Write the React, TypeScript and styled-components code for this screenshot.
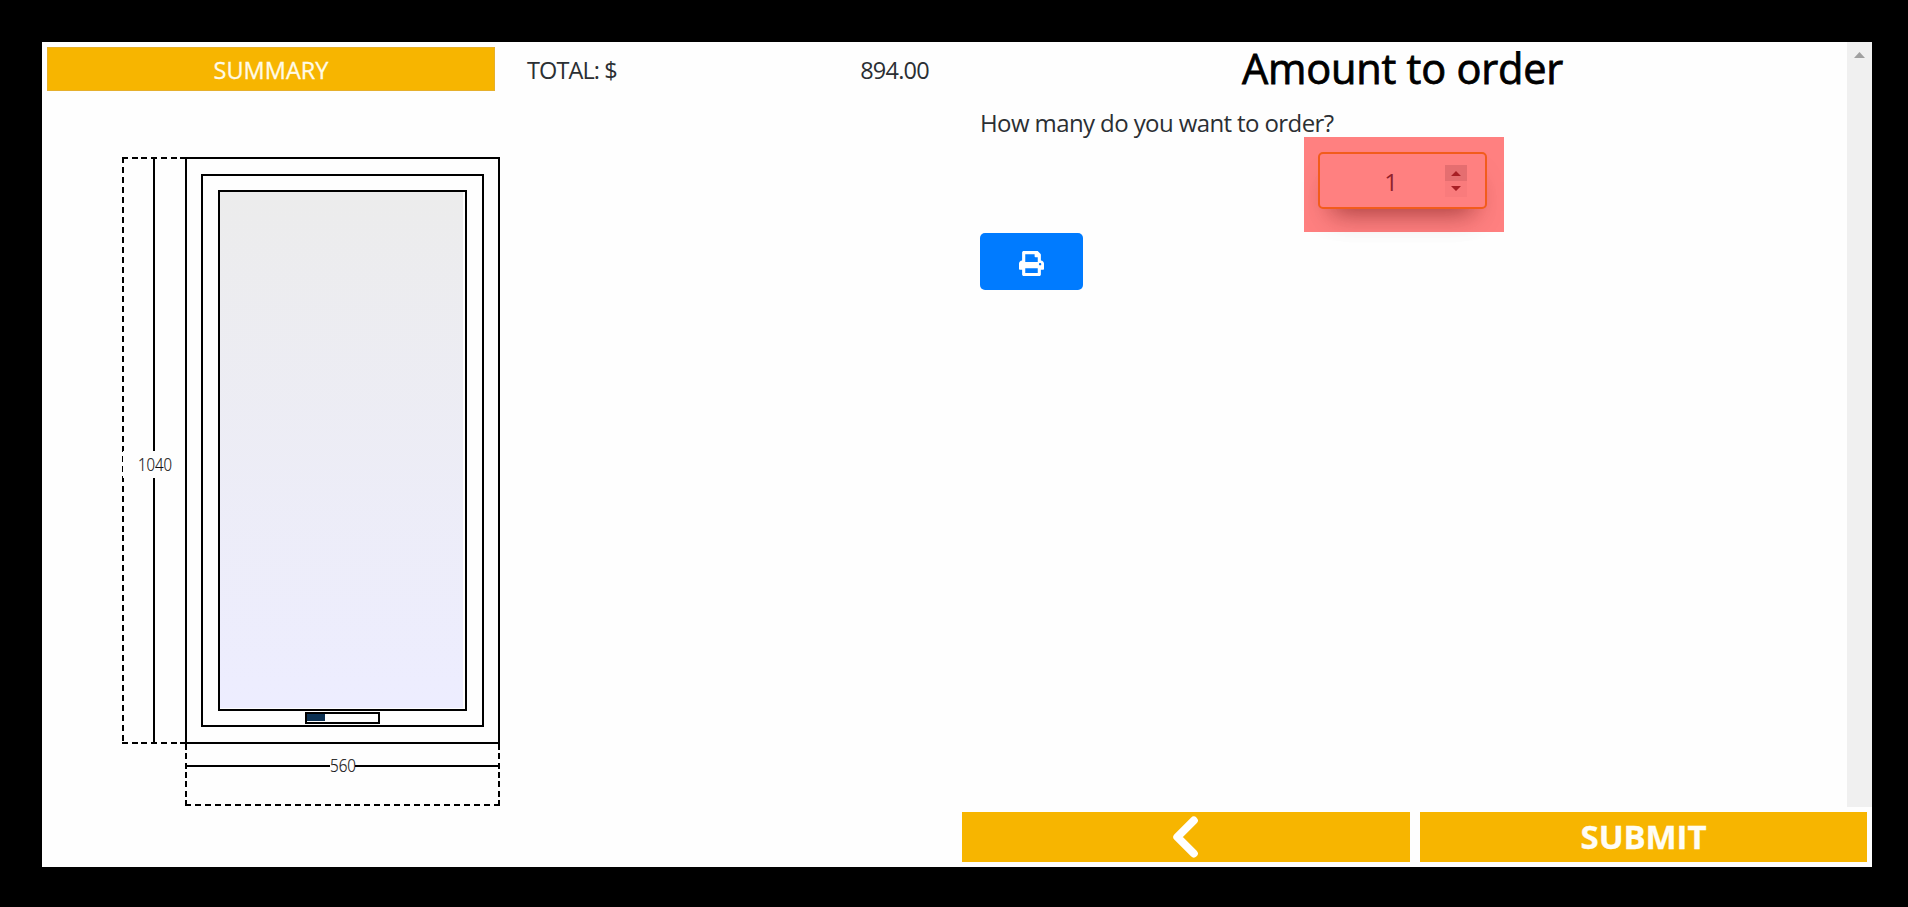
import React from "react";
import styled, { createGlobalStyle } from "styled-components";

const Global = createGlobalStyle`
  * { box-sizing: border-box; }
  html, body { margin: 0; background: #000; }
  body { font-family: "Open Sans", "Noto Sans", sans-serif; color: #2b2f33; overflow: hidden; }
`;

const AMBER = "#f7b500";

const Frame = styled.div`
  width: 1908px;
  height: 907px;
  background: #000;
  padding: 42px 36px 40px 42px;
  display: grid;
  grid-template-columns: 915px 915px;
`;

const Panel = styled.section`
  background: #fefefe;
  display: flex;
  flex-direction: column;
  min-height: 0;
`;

const TopBar = styled.header`
  display: grid;
  grid-template-columns: 448px 1fr;
  grid-template-rows: 44px;
  height: 44px;
  margin: 5px 0 0 5px;
`;

const SummaryButton = styled.button`
  border: 1px solid #e6b02c;
  background: ${AMBER};
  color: #fffbe8;
  font: 400 23.5px/42px "Open Sans", sans-serif;
  letter-spacing: 0;
  -webkit-text-stroke: 0.3px #fffbe8;
  padding: 1px 0 0;
  overflow: hidden;
`;

const Total = styled.div`
  display: flex;
  justify-content: space-between;
  padding: 0 28px 0 32px;
  font-size: 23.5px;
  line-height: 46px;
`;

const TotalLabel = styled.span`
  letter-spacing: -0.9px;
`;

const TotalValue = styled.span`
  letter-spacing: -0.75px;
`;

const Drawing = styled.svg`
  display: block;
  margin: 64px 0 0 78px;
`;

const Dimension = styled.text`
  font-family: "Open Sans", sans-serif;
  font-weight: 300;
  font-size: 18px;
  fill: #111;
  stroke: #111;
  stroke-width: 0.2px;
  text-anchor: middle;
`;

const ScrollArea = styled.div`
  height: 765px;
  display: grid;
  grid-template-columns: 1fr 25px;
`;

const Content = styled.div`
  padding-left: 23px;
  display: flex;
  flex-direction: column;
  align-items: flex-start;
`;

const Title = styled.h1`
  align-self: stretch;
  margin: 0;
  padding-right: 22px;
  height: 60px;
  text-align: center;
  color: #000;
  font-weight: 500;
  font-size: 41.5px;
  line-height: 53px;
  letter-spacing: -0.2px;
  -webkit-text-stroke: 0.8px #000;
`;

const Question = styled.label`
  height: 35px;
  line-height: 42px;
  font-size: 24px;
  letter-spacing: -0.6px;
  white-space: nowrap;
`;

const Highlight = styled.div`
  width: 200px;
  height: 95px;
  margin-left: 324px;
  padding: 15px 17px 23px 14px;
  background: #ff8080;
`;

const NumberField = styled.div`
  height: 57px;
  border: 2px solid #f25c1c;
  border-radius: 5px;
  background: #ff8080;
  display: grid;
  grid-template-columns: 1fr 22px;
  padding: 11px 18px 10px 18px;
  box-shadow: 0 16px 26px -14px rgba(90, 0, 0, 0.55), 0 22px 30px -12px rgba(90, 40, 40, 0.08);
`;

const Value = styled.span`
  text-align: center;
  color: #90222c;
  font-size: 24px;
  line-height: 34px;
  padding-right: 1px;
`;

const Spinner = styled.svg`
  display: block;
`;

const PrintButton = styled.button`
  width: 103px;
  height: 57px;
  margin-top: 1px;
  border: 0;
  border-radius: 5px;
  background: #007bff;
  display: flex;
  align-items: center;
  justify-content: center;
  padding: 4px 0 0;
`;

const Track = styled.div`
  background: #f0f0f0;
  padding: 10px 0 0 7px;
`;

const Actions = styled.footer`
  display: grid;
  grid-template-columns: 448px 447px;
  gap: 10px;
  padding: 5px;
  height: 60px;
`;

const ActionButton = styled.button`
  border: 0;
  padding: 0;
  background: ${AMBER};
  color: #fffdf5;
  font: 700 33px/50px "Open Sans", sans-serif;
  letter-spacing: -0.1px;
  -webkit-text-stroke: 0.3px #fffdf5;
  display: flex;
  align-items: center;
  justify-content: center;
`;

function WindowDrawing() {
  return (
    <Drawing width="384" height="653" viewBox="120 155 384 653" shapeRendering="crispEdges">
      <defs>
        <linearGradient id="glass" x1="0" y1="0" x2="0" y2="1">
          <stop offset="0" stopColor="#ececec" />
          <stop offset="1" stopColor="#ededff" />
        </linearGradient>
      </defs>
      <g fill="none" stroke="#000" strokeWidth="2">
        <path d="M122 158H187" strokeDasharray="6 3.7" />
        <path d="M122 743H187" strokeDasharray="6 3.7" />
        <path d="M123 157V744" strokeDasharray="6 3.96" />
        <path d="M186 744V806M499 744V806" strokeDasharray="6 3.33" />
        <path d="M185 805H500" strokeDasharray="6 3.97" />
        <path d="M154 158V451M154 478V743" />
        <path d="M187 766H330M355 766H499" />
        <rect x="186" y="158" width="313" height="585" />
        <rect x="202" y="175" width="281" height="551" />
        <rect x="219" y="191" width="247" height="519" />
        <rect x="306" y="713" width="73" height="10" />
      </g>
      <rect x="220" y="192" width="243" height="516" fill="url(#glass)" />
      <rect x="307" y="714" width="18" height="7" fill="#0b3052" />
      <rect x="123" y="451" width="28" height="27" fill="#fefefe" />
      <Dimension x="155" y="471" textLength="34" lengthAdjust="spacingAndGlyphs">1040</Dimension>
      <Dimension x="343" y="772" textLength="26" lengthAdjust="spacingAndGlyphs">560</Dimension>
    </Drawing>
  );
}

export default function App() {
  return (
    <>
      <Global />
      <Frame>
        <Panel>
          <TopBar>
            <SummaryButton>SUMMARY</SummaryButton>
            <Total>
              <TotalLabel>TOTAL: $</TotalLabel>
              <TotalValue>894.00</TotalValue>
            </Total>
          </TopBar>
          <WindowDrawing />
        </Panel>
        <Panel>
          <ScrollArea>
            <Content>
              <Title>Amount to order</Title>
              <Question>How many do you want to order?</Question>
              <Highlight>
                <NumberField>
                  <Value>1</Value>
                  <Spinner width="22" height="32" viewBox="0 0 22 32">
                    <path d="M0 0h22v16H0z" fill="#e56e70" />
                    <path d="M0 16h22v16H0z" fill="#f97b7c" />
                    <path d="M6 11l5-5 5 5zM6 21h10l-5 5z" fill="#a81f25" />
                  </Spinner>
                </NumberField>
              </Highlight>
              <PrintButton aria-label="Print">
                <svg width="25" height="25" viewBox="0 0 512 512" fill="#fff">
                  <path d="M448 192V77.25c0-8.49-3.37-16.62-9.37-22.63L393.37 9.37c-6-6-14.14-9.37-22.63-9.37H96C78.33 0 64 14.33 64 32v160c-35.35 0-64 28.65-64 64v112c0 8.84 7.16 16 16 16h48v96c0 17.67 14.33 32 32 32h320c17.67 0 32-14.33 32-32v-96h48c8.84 0 16-7.16 16-16V256c0-35.35-28.65-64-64-64zm-64 256H128v-96h256v96zm0-224H128V64h192v48c0 8.84 7.16 16 16 16h48v96zm48 72c-13.25 0-24-10.75-24-24 0-13.26 10.75-24 24-24s24 10.74 24 24c0 13.25-10.75 24-24 24z" />
                </svg>
              </PrintButton>
            </Content>
            <Track>
              <svg width="11" height="6" viewBox="0 0 11 6" display="block">
                <path d="M0 6L5.500 0L11 6z" fill="#a0a0a0" />
              </svg>
            </Track>
          </ScrollArea>
          <Actions>
            <ActionButton aria-label="Back">
              <svg width="26" height="42" viewBox="0.7 0 26 42">
                <path d="M21.500 4.500L5 21L21.500 37.500" fill="none" stroke="#fff" strokeWidth="8" strokeLinecap="round" strokeLinejoin="round" />
              </svg>
            </ActionButton>
            <ActionButton>SUBMIT</ActionButton>
          </Actions>
        </Panel>
      </Frame>
    </>
  );
}
